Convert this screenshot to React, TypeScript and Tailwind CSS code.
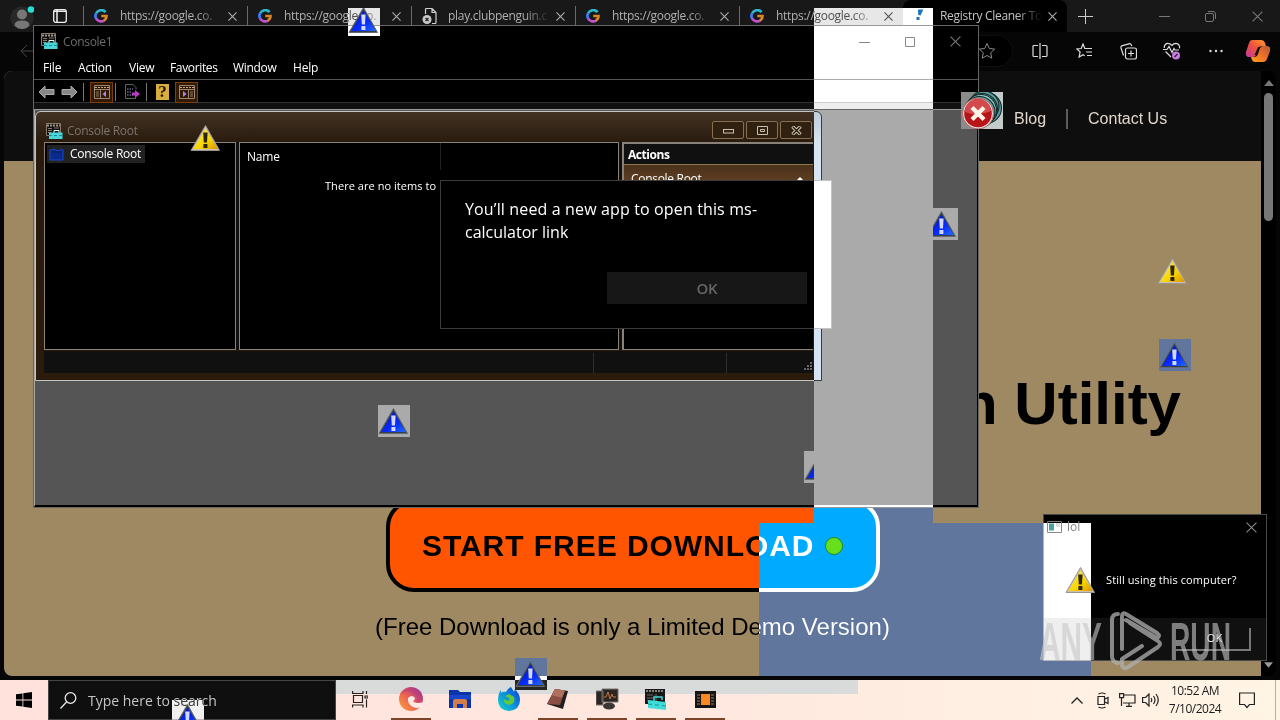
import type { ReactNode } from "react";

const GoogleIcon = () => (
  <svg width="14" height="14" viewBox="0 0 14 14" fill="none" strokeWidth="2.7">
    <path d="M11.6 3.2A5.6 5.6 0 0 0 2.1 4.6" stroke="#2bb6c9" />
    <path d="M2.1 4.4A5.6 5.6 0 0 0 2.1 9.6" stroke="#3a7dff" />
    <path d="M2.1 9.4A5.6 5.6 0 0 0 10.2 11.5" stroke="#c44fd0" />
    <path d="M7.2 7H12.5A5.6 5.6 0 0 1 9.9 11.6" stroke="#d98425" />
  </svg>
);

const BrokenPageIcon = () => (
  <svg width="16" height="16" viewBox="0 0 16 16" fill="none" stroke="#d0d0d0" strokeWidth="1.2">
    <path d="M3.5 6V1.5a1 1 0 0 1 1-1H10l4 4V14.500a1 1 0 0 1-1 1H10M10 .5v4h4" />
    <circle cx="5" cy="11.500" r="4.500" fill="#c8c8c8" stroke="none" />
    <path d="M3.500 10l3 3M6.500 10l-3 3" stroke="#222" />
  </svg>
);

const CloseIcon = ({ size = 9, color = "#a8a8a8", width = 1.3 }: { size?: number; color?: string; width?: number }) => (
  <svg width={size} height={size} viewBox="0 0 10 10" stroke={color} strokeWidth={width} className="shrink-0">
    <path d="M.5 .5L9.500 9.500M9.500 .5L.5 9.500" />
  </svg>
);

const WarningIcon = () => (
  <svg width="32" height="32" viewBox="0 0 32 32" className="block">
    <defs>
      <linearGradient id="warn" x1="0" y1="0" x2="1" y2="1">
        <stop offset="0" stopColor="#fff04a" />
        <stop offset="0.6" stopColor="#f8d400" />
        <stop offset="1" stopColor="#dc9200" />
      </linearGradient>
    </defs>
    <path d="M15.500 3.500L29.500 28.500H1Z" fill="#c9bfb4" stroke="#9c958f" strokeWidth="1" strokeLinejoin="round" />
    <path d="M15.500 6.500L27.800 27H3.200Z" fill="url(#warn)" />
    <path d="M13.200 10.500h4.400l-.6 10h-3.200zM13.400 22h4v4h-4z" fill="#2a2607" />
  </svg>
);

// warning icon painted with inverted colours
const InvertedWarning = ({ className, offset = "" }: { className: string; offset?: string }) => (
  <div className={`absolute overflow-hidden ${className}`}>
    <div className={offset}>
      <WarningIcon />
    </div>
    <div className="absolute inset-0 bg-white mix-blend-difference" />
  </div>
);

const ConsoleIcon = () => (
  <svg width="17" height="17" viewBox="0 0 17 17">
    <path d="M.5 .5h14v12H.5z" fill="#111" stroke="#8b7a6a" />
    <path d="M1 2.500h13" stroke="#a39484" strokeWidth="2" strokeDasharray="2 1" />
    <path d="M2 5.500h4M2 7.500h4M2 9.500h3M8 5h5" stroke="#857769" />
    <path d="M8 10V7.500h5V10" stroke="#d2ffff" fill="none" />
    <path d="M3 9.500h13.500V16H3z" fill="#49d5d8" />
    <path d="M3 12.500h13" stroke="#178c96" strokeDasharray="3 2" />
  </svg>
);

const Tab = ({ title, icon, active }: { title: string; icon: ReactNode; active?: boolean }) => (
  <div
    className={`relative flex h-8 w-[164px] shrink-0 items-center pl-[11px] ${
      active ? "rounded-t-lg bg-black text-[#c4c4c4]" : "text-[#b0b0b0]"
    }`}
  >
    {!active && <div className="absolute left-0 top-1.5 h-5 w-px bg-[#6c6c6c]" />}
    <div className="flex w-[26px] shrink-0">{icon}</div>
    <div className="w-[106px] shrink-0 whitespace-nowrap text-xs tracking-[-0.3px] [mask-image:linear-gradient(to_right,black_72%,transparent_96%)]">
      {title}
    </div>
    <div className="ml-[2px]">
      <CloseIcon />
    </div>
  </div>
);

const TabStrip = () => (
  <div className="flex h-8 bg-[#181818]">
    <div className="flex w-[83px] items-center">
      <svg width="24" height="24" viewBox="0 0 24 24" className="ml-[10px] mt-1">
        <circle cx="12" cy="12" r="11.500" fill="#282828" />
        <circle cx="12" cy="8.500" r="5" fill="#777" />
        <path d="M4.500 19.500Q4.500 14.500 12 14.500T19.500 19.500Q16 23 12 23T4.500 19.500Z" fill="#777" />
        <circle cx="21" cy="3.500" r="3.300" fill="#24e0d4" />
      </svg>
      <svg width="14" height="14" viewBox="0 0 14 14" fill="none" className="ml-[19px]">
        <rect x=".7" y=".7" width="12.600" height="12.600" rx="2" stroke="#eee" strokeWidth="1.300" />
        <path d="M1 2.300h12M4 1v12" stroke="#eee" strokeWidth="1.500" />
      </svg>
    </div>
    <Tab title="https://google.co." icon={<GoogleIcon />} />
    <Tab title="https://google.co." icon={<GoogleIcon />} />
    <Tab title="play.clubpenguin.c" icon={<BrokenPageIcon />} />
    <Tab title="https://google.co." icon={<GoogleIcon />} />
    <Tab title="https://google.co." icon={<GoogleIcon />} />
    <Tab
      active
      title="Registry Cleaner To"
      icon={
        <svg width="16" height="16" viewBox="0 0 16 16" fill="none" stroke="#e08a44" strokeWidth="2.500">
          <path d="M4 3h3l-2 4M4 9v3" strokeWidth="3" />
        </svg>
      }
    />
    <div className="flex flex-1 items-center text-[#888]">
      <svg width="15" height="15" viewBox="0 0 15 15" stroke="#ccc" className="ml-[11px]">
        <path d="M7.500 0v15M0 7.500h15" />
      </svg>
      <svg width="11" height="11" viewBox="0 0 11 11" stroke="#777" className="ml-[66px]">
        <path d="M0 5.500h11" />
      </svg>
      <svg width="11" height="11" viewBox="0 0 11 11" stroke="#777" fill="none" className="ml-[35px]">
        <rect x=".5" y="2.500" width="8" height="8" rx="1.500" />
        <path d="M3 .5h5a2.500 2.500 0 0 1 2.500 2.500v5" />
      </svg>
      <div className="ml-[36px]">
        <CloseIcon size={11} color="#777" width={1} />
      </div>
    </div>
  </div>
);

const AddressBar = () => (
  <div className="flex h-[38px] items-center bg-[#060606]">
    <svg width="16" height="14" viewBox="0 0 16 14" stroke="#444" fill="none" className="ml-5">
      <path d="M16 7H1M7 1L1 7l6 6" />
    </svg>
    <div className="ml-[24px] flex h-[30px] w-[952px] items-center justify-end rounded-full bg-black pr-4 ring-1 ring-[#0e0e0e]">
      <svg width="18" height="18" viewBox="0 0 18 18" stroke="#8a8a8a" fill="none">
        <path d="M9 1.500l2.300 5 5.400.6-4 3.700 1.100 5.400L9 13.500l-4.800 2.700 1.100-5.400-4-3.700 5.400-.6z" />
      </svg>
    </div>
    <div className="ml-[20px] flex items-center gap-[28px]">
      <svg width="16" height="16" viewBox="0 0 16 16" stroke="#ddd" fill="none" strokeWidth="1.200">
        <path d="M8 0v16M6 2.500H2a1 1 0 0 0-1 1v9a1 1 0 0 0 1 1h4M10 2.500h4a1 1 0 0 1 1 1v9a1 1 0 0 1-1 1h-4" />
      </svg>
      <svg width="17" height="17" viewBox="0 0 17 17" stroke="#ddd" fill="none" strokeWidth="1.200">
        <path d="M11 5.500H8.800L7 1 5.200 5.500.8 6l3.300 3-1 5L7 11.700l1.700 1M10.500 5.500H16M10 9h6M11 12.500h5" />
      </svg>
      <svg width="17" height="17" viewBox="0 0 17 17" stroke="#ddd" fill="none" strokeWidth="1.200" className="-ml-px">
        <rect x="5.500" y="5" width="11" height="11" rx="2" />
        <path d="M11 7.500v6M8 10.500h6M3.500 12.500L1 5a2 2 0 0 1 1.300-2.400L9 .8a2 2 0 0 1 2.400 1.300l.4 1" />
      </svg>
      <svg width="18" height="18" viewBox="0 0 18 18" stroke="#ddd" fill="none" strokeWidth="1.200" className="-ml-[2px]">
        <path d="M8 15L2.500 9.500M1.300 6C1 3 3 1.200 5 1.300c2 0 3 1.200 3.800 2.200C9.700 2.400 11 1.300 13 1.300c2.500.2 4 2.500 3.500 5M0 7.500h4l2-3 3 6 2-4 1 1.500h4" />
        <circle cx="13" cy="13.500" r="4" fill="#c77be0" stroke="none" />
        <path d="M11.500 15l3-3" stroke="#222" />
      </svg>
      <svg width="14" height="4" viewBox="0 0 14 4" fill="#ddd">
        <circle cx="1.500" cy="2" r="1.200" />
        <circle cx="7" cy="2" r="1.200" />
        <circle cx="12.500" cy="2" r="1.200" />
      </svg>
    </div>
    <svg width="26" height="24" viewBox="0 0 26 24" className="ml-[22px]">
      <defs>
        <linearGradient id="copilotL" x1="1" y1="0" x2="0" y2="1">
          <stop offset="0" stopColor="#ff9c2a" />
          <stop offset="0.5" stopColor="#f0503c" />
          <stop offset="1" stopColor="#c33aa0" />
        </linearGradient>
        <linearGradient id="copilotR" x1="1" y1="0" x2="0" y2="1">
          <stop offset="0" stopColor="#b05a36" />
          <stop offset="0.5" stopColor="#f0702a" />
          <stop offset="1" stopColor="#ffa319" />
        </linearGradient>
      </defs>
      <path d="M7 1h9q3 0 4 3l1 3h-4q-3 0-4 3l-2 6q-1 2-3 2H4q-4 0-3-5L4 4Q5 1 7 1Z" fill="url(#copilotL)" />
      <path d="M19 23h-9q-2 0-3-2l-1-3h3q3 0 4-3l2-6q1-2 3-2h4q4 0 3 5l-3 8q-1 3-3 3Z" fill="url(#copilotR)" />
      <path d="M13 8h3q-2 0-3 3l-1.500 5h-2z" fill="#2a1208" />
    </svg>
  </div>
);

const Browser = () => (
  <div className="absolute left-0 top-0 flex h-[680px] w-[1280px] flex-col overflow-hidden bg-[#060606]">
    <TabStrip />
    <AddressBar />
    <div className="ml-1 mr-1 mt-px flex h-[605px] overflow-hidden rounded-lg bg-black">
      <div className="flex w-[1257px] flex-col bg-[#9f8963]">
        <div className="flex h-[90px] items-center bg-[#0e0e0e] pl-[1010px] pt-[5px] font-['Liberation_Sans'] text-base text-[#e0d6cc]">
          <span>Blog</span>
          <span className="ml-5 h-5 w-0.5 bg-[#5c5c5c]" />
          <span className="ml-5">Contact Us</span>
        </div>
        <h1 className="mr-[80px] mt-[207px] h-[72px] text-right font-['Liberation_Sans'] text-[60px] font-bold leading-[72px] text-black">
          n Utility
        </h1>
        <div className="ml-[382px] mt-[59px] flex h-[93px] w-[494px] items-center whitespace-nowrap rounded-[28px] border-4 border-black bg-[#ff5500] pl-8 font-['Liberation_Sans'] text-[30px] font-bold tracking-[0.95px] text-black">
          START FREE DOWNLOAD
        </div>
        <p className="ml-[371px] mt-[17px] whitespace-nowrap font-['Liberation_Sans'] text-2xl leading-9 text-black">
          (Free Download is only a Limited Demo Version)
        </p>
      </div>
      <div className="flex flex-1 flex-col items-center pb-2 pt-[9px]">
        <svg width="10" height="6" viewBox="0 0 10 6" fill="#777">
          <path d="M5 0l5 6H0z" />
        </svg>
        <div className="mt-[7px] h-[128px] w-[9px] rounded-full bg-[#777]" />
        <svg width="9" height="6" viewBox="0 0 10 6" fill="#999" className="mt-auto">
          <path d="M5 6l5-6H0z" />
        </svg>
      </div>
    </div>
  </div>
);

const ChildButton = ({ children }: { children: ReactNode }) => (
  <div className="flex h-[18px] w-8 items-center justify-center rounded-[2px] border border-[#86704f] bg-[#30200f]">
    {children}
  </div>
);

const ConsoleChild = () => (
  <div className="mt-px flex h-[270px] w-[787px] flex-col rounded-t-md border border-[#c4c4c4] bg-[linear-gradient(#413224,#281a0c_31px,#2a1b0a)] pb-[7px] pl-2 pr-[8px]">
    <div className="flex h-[30px] items-center pl-0.5 pt-2">
      <ConsoleIcon />
      <span className="ml-1 text-xs tracking-[-0.28px] text-[#7d736b]">Console Root</span>
      <div className="-mt-[2px] ml-auto mr-[1px] flex gap-0.5">
        <ChildButton>
          <svg width="11" height="5" viewBox="0 0 11 5" className="mt-[3px]">
            <rect x=".5" y=".5" width="10" height="3.500" fill="none" stroke="#c9bfae" />
          </svg>
        </ChildButton>
        <ChildButton>
          <svg width="11" height="9" viewBox="0 0 11 9" fill="none" stroke="#c9bfae">
            <path d="M.5 .5h10v8H.5zM3.500 3.500h4v2h-4z" />
          </svg>
        </ChildButton>
        <ChildButton>
          <svg width="11" height="9" viewBox="0 0 11 9">
            <path d="M1.500 .5l8 8M9.500 .5l-8 8" stroke="#c9bfae" strokeWidth="3.500" />
            <path d="M2 1l7 7M9 1L2 8" stroke="#241709" strokeWidth="1.300" />
          </svg>
        </ChildButton>
      </div>
    </div>
    <div className="flex h-[208px] gap-[3px] bg-[#111] text-xs text-white">
      <div className="w-[192px] shrink-0 border border-[#8a8278] bg-black p-0.5">
        <div className="flex h-[18px] w-[98px] items-center whitespace-nowrap bg-[#222] pl-0.5">
          <svg width="15" height="13" viewBox="0 0 15 13">
            <path d="M1 2l5-1 1 1.500h4L12 1l2 1v10H1z" fill="#0b2a8c" stroke="#1a47c4" />
            <path d="M3 4h10" stroke="#061a5c" />
          </svg>
          <span className="ml-[6px] tracking-[-0.25px]">Console Root</span>
        </div>
      </div>
      <div className="flex w-[380px] shrink-0 flex-col border border-[#8a8278] bg-black">
        <div className="flex h-[27px] w-[201px] items-center border-r border-[#222] pl-[7px] tracking-[-0.2px]">Name</div>
        <p className="ml-[85px] mt-[9px] whitespace-nowrap text-[11px] tracking-[0.05px]">There are no items to</p>
      </div>
      <div className="flex-1 border-b border-l-2 border-t-2 border-[#8a8278] bg-black">
        <div className="flex h-[21px] items-center border-b border-[#8d7550] bg-[#101010] pl-1 pt-0.5 font-bold tracking-[-0.45px]">
          Actions
        </div>
        <div className="flex h-[27px] items-center justify-between bg-[linear-gradient(#4a321b,#6a4626)] pl-[7px] pr-[9px]">
          <span className="tracking-[-0.3px]">Console Root</span>
          <svg width="8" height="4" viewBox="0 0 8 4" fill="#fff">
            <path d="M4 0l4 4H0z" />
          </svg>
        </div>
      </div>
    </div>
    <div className="mt-px flex h-[22px] items-end bg-[#101010]">
      <div className="h-5 w-[550px] border-r border-[#2e2e2e]" />
      <div className="h-5 w-[133px] border-r border-[#2e2e2e]" />
      <svg width="9" height="9" viewBox="0 0 9 9" fill="#666" className="mb-0.5 ml-auto">
        <path d="M6 0h2v2H6zM3 3h2v2H3zM6 3h2v2H6zM0 6h2v2H0zM3 6h2v2H3zM6 6h2v2H6z" />
      </svg>
    </div>
  </div>
);

const Console = () => (
  <div className="absolute left-[33px] top-[25px] flex h-[483px] w-[946px] flex-col border border-[#666] bg-black">
    <div className="flex h-[30px] items-center pl-[7px] pt-px">
      <ConsoleIcon />
      <span className="ml-[5px] text-xs tracking-[-0.3px] text-[#6c6c6c]">Console1</span>
      <div className="ml-auto mr-[17px] flex items-center gap-[35px]">
        <svg width="11" height="10" viewBox="0 0 11 10" stroke="#777">
          <path d="M0 5.500h11" />
        </svg>
        <svg width="10" height="10" viewBox="0 0 10 10" stroke="#777" fill="none">
          <path d="M.5 .5h9v9h-9z" />
        </svg>
        <CloseIcon size={11} color="#777" width={1} />
      </div>
    </div>
    <div className="flex h-[23px] items-center pl-[9px] text-xs tracking-[-0.2px] text-white">
      <span className="w-[35px]">File</span>
      <span className="w-[51px]">Action</span>
      <span className="w-[41px]">View</span>
      <span className="w-[63px] tracking-[-0.35px]">Favorites</span>
      <span className="w-[60px] tracking-[-0.3px]">Window</span>
      <span>Help</span>
    </div>
    <div className="flex h-[24px] items-center border-b border-t border-[#555] border-b-[#333] pl-1 pt-0.5">
      <svg width="17" height="14" viewBox="0 0 17 14" fill="#888" stroke="#aaa">
        <path d="M1 7l6-6v3.500h9v5H7V13z" />
      </svg>
      <svg width="17" height="14" viewBox="0 0 17 14" fill="#888" stroke="#aaa" className="ml-[6px]">
        <path d="M16 7l-6-6v3.500H1v5h9V13z" />
      </svg>
      <span className="ml-[5px] h-[18px] w-px bg-[#777]" />
      <span className="ml-[6px] flex h-[21px] w-[23px] items-center justify-center border border-[#7a3f0a] bg-[#331900]">
        <PaneIcon />
      </span>
      <span className="ml-[2px] h-[18px] w-px bg-[#777]" />
      <svg width="17" height="16" viewBox="0 0 17 16" fill="none" className="ml-[8px]">
        <path d="M9 .5H1.500v14h10V11M9 .5l3 3v2" stroke="#566b56" />
        <path d="M3 5h6M3 8h5M3 11h6" stroke="#9a8bd0" strokeDasharray="1.500 1" />
        <path d="M8 8.500h3V6l5 4-5 4v-2.500H8z" fill="#b53cc4" />
      </svg>
      <span className="ml-[5px] h-[18px] w-px bg-[#777]" />
      <span className="ml-[9px] flex h-4 w-[13px] items-center justify-center bg-[#d9ad3c] font-['Liberation_Serif'] text-[17px] font-bold leading-4 text-[#1c1400]">
        ?
      </span>
      <span className="ml-[6px] flex h-[21px] w-[23px] items-center justify-center border border-[#7a3f0a] bg-[#331900]">
        <PaneIcon flip />
      </span>
    </div>
    <div className="flex flex-1 flex-col border-t-[6px] border-[#111] bg-[#555]">
      <div className="flex flex-1 flex-col border-b-2 border-l border-r border-t border-b-black border-l-[#aaa] border-r-black border-t-[#999]">
        <ConsoleChild />
      </div>
    </div>
  </div>
);

const PaneIcon = ({ flip }: { flip?: boolean }) => (
  <svg width="16" height="14" viewBox="0 0 16 14" fill="none">
    <path d={flip ? "M.5 .5h15v13H.5zM.5 4.500h15M9.500 4.500v9" : "M.5 .5h15v13H.5zM.5 4.500h15M6.500 4.500v9"} stroke="#9a8876" />
    <path d="M1 2.500h14" stroke="#c0ad98" strokeDasharray="2 1" />
    <path d={flip ? "M11 7h3M11 9h3M11 11h3" : "M2 7h3M2 9h3M2 11h3"} stroke="#8a7868" />
    <path d={flip ? "M4 6v6l3.500-3z" : "M12 6v6L8.500 9z"} fill="#b880e8" />
  </svg>
);

const AppPrompt = () => (
  <div className="absolute left-[440px] top-[180px] flex h-[149px] w-[392px] flex-col border border-[#3c3c3c] bg-black px-6 pt-[17px] text-white">
    <p className="w-[320px] whitespace-nowrap text-base leading-[23px] tracking-[0.14px]">
      You’ll need a new app to open this ms-
      <br />
      <span className="tracking-normal">calculator link</span>
    </p>
    <div className="ml-[142px] mt-[28px] flex h-8 w-[200px] items-center justify-center bg-[#171717] pt-px text-[15px] font-semibold tracking-[-0.3px] text-[#666]">
      OK
    </div>
  </div>
);

const LolDialog = () => (
  <div className="absolute left-[1043px] top-[514px] flex h-[147px] w-[224px] flex-col border border-[#4a4a4a] bg-black text-white">
    <div className="flex h-[24px] items-center pl-[3px] pr-[9px]">
      <svg width="15" height="12" viewBox="0 0 15 12" fill="none">
        <path d="M.5 .5h14v11H.5z" stroke="#777" />
        <path d="M2 2.500h5v7H2z" fill="#b4605c" />
        <path d="M9 3h4M9 5h4" stroke="#444" />
      </svg>
      <span className="ml-[5px] text-xs text-[#7d7d7d]">lol</span>
      <div className="ml-auto">
        <CloseIcon size={11} color="#888" width={1} />
      </div>
    </div>
    <p className="mt-[32px] whitespace-nowrap pl-[62px] text-[11px] leading-[18px] tracking-[0.1px]">Still using this computer?</p>
    <div className="mt-auto flex h-[42px] items-center justify-end bg-[#101010] pr-[15px]">
      <div className="flex h-[23px] w-[75px] items-center justify-center border-b-2 border-r-2 border-[#777] pl-1 pt-px text-[11px]">
        OK
      </div>
    </div>
  </div>
);

const ErrorTrail = () => (
  <svg width="42" height="37" viewBox="0 0 42 37" className="absolute left-[961px] top-[92px]">
    <path d="M0 0h42v37H0z" fill="#c3cccb" />
    <path d="M0 0h17v37H0z" fill="#8b8b8b" />
    <g fill="#589c9b" stroke="#15292a" strokeWidth="1.100">
      <circle cx="25" cy="16" r="15.500" />
      <circle cx="23" cy="14" r="15" />
      <circle cx="21" cy="17" r="15.500" />
      <circle cx="20" cy="18" r="15.500" fill="#8ccac4" />
      <circle cx="18.500" cy="20" r="15.500" />
    </g>
    <circle cx="17" cy="21.500" r="15.500" fill="#e3dddd" stroke="#a66" />
    <circle cx="17" cy="21.500" r="13.800" fill="#b81418" />
    <path d="M4 20a13 13 0 0 1 26-1q-13 6-26 1Z" fill="#d44a4c" />
    <path d="M11 15.500l12 12M23 15.500l-12 12" stroke="#fff4e8" strokeWidth="4.300" />
  </svg>
);

const Watermark = () => (
  <svg width="196" height="66" viewBox="0 0 196 66" className="absolute left-[1038px] top-[607px]">
    <g fill="#c8c8c8" opacity="0.6" fontWeight="bold" fontFamily="Liberation Sans" fontSize="54">
      <text x="1" y="53" textLength="63" lengthAdjust="spacingAndGlyphs">
        ANY
      </text>
      <text x="132" y="53" textLength="61" lengthAdjust="spacingAndGlyphs">
        RUN
      </text>
    </g>
    <g fill="none" stroke="#b0b0b0" strokeWidth="4" opacity="0.75" strokeLinejoin="round" strokeLinecap="round">
      <path d="M80 7q-6 0-6 6v36q0 6 6 7" />
      <path d="M84 42V9q0-4 4-2l31 19q4 3 0 5L88 13" />
      <path d="M104 39L84 52v6q1 5 6 2l30-20q4-3 0-6L92 16" />
    </g>
  </svg>
);

const Running = ({ children, on = true }: { children: ReactNode; on?: boolean }) => (
  <div className={`flex h-10 w-10 items-center justify-center ${on ? "border-b-2 border-[#7c452a]" : "border-b-2 border-transparent"}`}>
    {children}
  </div>
);

const Taskbar = () => (
  <div className="absolute left-0 top-[680px] flex h-10 w-[1280px] items-center bg-[linear-gradient(to_right,#ffe2db,#ffe8df_55%,#fff5e5)]">
    <div className="absolute left-[336px] top-0 h-[14px] w-[522px] bg-[#d9dada]" />
    <div className="relative flex w-12 justify-center">
      <svg width="16" height="16" viewBox="0 0 16 16">
        <path d="M0 2.300l6.500-.9v6.200H0zM7.300 1.300L16 0v7.600H7.300zM0 8.400h6.500v6.200L0 13.700zM7.300 8.400H16V16l-8.700-1.300z" />
      </svg>
    </div>
    <div className="relative flex h-10 w-[288px] items-center border border-[#444] bg-[#0f0f0f] pl-[11px]">
      <svg width="17" height="17" viewBox="0 0 17 17" fill="none" stroke="#e8e8e8" strokeWidth="1.300">
        <circle cx="10.500" cy="6" r="5.300" />
        <path d="M6.500 10L.5 16.500" />
      </svg>
      <span className="ml-[11px] pt-px text-sm text-[#c4c4c4]">Type here to search</span>
    </div>
    <div className="relative flex h-10 items-center pl-1">
      <Running on={false}>
        <svg width="16" height="17" viewBox="0 0 16 17" fill="none" stroke="#2a2220" strokeWidth="1.200">
          <path d="M.6 0v2.500H11V0M1.500 4.500h9v7h-9zM.6 16.500V14H11v2.500M14.500 0v3M14.500 8.500v8M13 5h3v2h-3z" />
        </svg>
      </Running>
      <div className="ml-[11px] flex gap-[9px]">
        <Running>
          <svg width="24" height="24" viewBox="0 0 24 24">
            <defs>
              <linearGradient id="edge" x1="0" y1="1" x2="1" y2="0">
                <stop offset="0" stopColor="#f7a53c" />
                <stop offset="0.45" stopColor="#ee6350" />
                <stop offset="1" stopColor="#8d2aa8" />
              </linearGradient>
            </defs>
            <circle cx="12" cy="12" r="12" fill="url(#edge)" />
            <path d="M9 11q4-4 7 0 0 2-2 3 2 3 8 1.500L24 16l-2 4q-5 2-9-.5Q8 16 9 11Z" fill="#ffe9e2" />
            <path d="M1 8q5-5 11-3 9 3 5 10 7 0 6-5-2-9-12-9Q4 2 1 8Z" fill="#b93c78" opacity=".45" />
          </svg>
        </Running>
        <Running on={false}>
          <svg width="22" height="19" viewBox="0 0 22 19">
            <path d="M0 0h9l2 2h11v16H0z" fill="#0a35a8" />
            <path d="M0 5h22v4H0z" fill="#1746cc" />
            <path d="M4 18V11q0-2 2-2h10q2 0 2 2v7h-4v-4H8v4z" fill="#d07c4c" />
          </svg>
        </Running>
        <Running on={false}>
          <svg width="24" height="24" viewBox="0 0 24 24">
            <defs>
              <linearGradient id="fox" x1="1" y1="0" x2="0" y2="1">
                <stop offset="0" stopColor="#0a3bd4" />
                <stop offset="0.5" stopColor="#0a8fe0" />
                <stop offset="1" stopColor="#19d8c0" />
              </linearGradient>
            </defs>
            <path d="M14 0l3 5q1-2 0-3 6 4 6 11 0 10-11 11Q1 23 1 13 1 7 4 3v3q2-2 5-1 2-4 5-5Z" fill="url(#fox)" />
            <path d="M8 9l4-2 5 3q2 7-5 8-6-1-5-6l4 2 2-2Z" fill="#64c83c" />
          </svg>
        </Running>
        <Running>
          <svg width="22" height="22" viewBox="0 0 22 22">
            <path d="M8 1l13 2-5 18L0 16z" fill="#241e1c" />
            <path d="M8 1l10 1.500L13 17 0 16z" fill="#8b4f44" />
            <path d="M8 1l10 1.500-3 7-10-2z" fill="#b0705f" />
          </svg>
        </Running>
        <Running>
          <svg width="23" height="22" viewBox="0 0 23 22">
            <path d="M0 3h7v14H0zM6 1h16v13H6z" fill="#2a2624" stroke="#77706c" />
            <path d="M8 9h2l2-5 2 7 2-5 1 3h3" stroke="#c8703c" fill="none" />
            <ellipse cx="13" cy="18" rx="6" ry="3.500" fill="#3a3634" />
          </svg>
        </Running>
        <Running>
          <svg width="23" height="23" viewBox="0 0 23 23">
            <path d="M0 1h20v15H0z" fill="#17181a" />
            <path d="M1 3h18" stroke="#8b8177" strokeWidth="2" strokeDasharray="2 1" />
            <path d="M2 7h6M2 10h6M2 13h4M11 6v8" stroke="#72685f" />
            <path d="M9 13V9h8v3" stroke="#3fd8da" strokeWidth="1.500" fill="none" />
            <path d="M3 12l18 2v8L3 20z" fill="#40dcd8" />
            <path d="M3 16l18 2" stroke="#139aa0" strokeDasharray="4 3" />
          </svg>
        </Running>
        <Running>
          <svg width="21" height="17" viewBox="0 0 21 17">
            <path d="M0 0h21v17H0z" fill="#17130f" />
            <path d="M2 4h3M2 7h3M2 10h3M2 13h3M16 4h3M16 7h3M16 10h3M16 13h3" stroke="#8d8278" />
            <path d="M6 3h9v11H6z" fill="#f98722" />
          </svg>
        </Running>
      </div>
    </div>
    <div className="ml-auto mr-[25px] flex items-center">
      <svg width="12" height="7" viewBox="0 0 12 7" fill="none" stroke="#222" strokeWidth="1.300">
        <path d="M.5 6.500l5.500-5.500 5.500 5.500" />
      </svg>
      <svg width="12" height="17" viewBox="0 0 12 17" fill="none" stroke="#222" strokeWidth="1.200" className="ml-[14px]">
        <path d="M1.500 2Q5 0 8.500 2M1.500 15Q5 17 8.500 15M1 4.500h6.500v8H1zM8 7l3-1.500v6L8 10" />
      </svg>
      <svg width="17" height="14" viewBox="0 0 17 14" fill="none" stroke="#222" strokeWidth="1.200" className="ml-[10px]">
        <path d="M5 2h11v8H4M10 10v3M7 13.300h6M.6 .6h4v4h-4zM2.500 4.500V13" />
      </svg>
      <svg width="17" height="14" viewBox="0 0 17 14" fill="none" stroke="#222" strokeWidth="1.200" className="ml-[6px]">
        <path d="M.6 4.500h3L7 1v12L3.600 9.500h-3zM9 5q1.500 2 0 4M11.500 3q3 4 0 8M14 1q4.500 6 0 12" />
      </svg>
      <div className="ml-[1px] w-[70px] whitespace-nowrap text-center text-xs font-medium leading-[18px] tracking-[-0.5px] text-[#1c1c1c]">
        10:52 AM
        <br />
        7/10/2024
      </div>
      <svg width="16" height="17" viewBox="0 0 16 17" fill="none" stroke="#222" strokeWidth="1.200" className="ml-[9px]">
        <path d="M.6 1h14.800v11.500H10.500L8 15.500l-2.500-3H.6z" />
      </svg>
    </div>
    <div className="absolute right-[4px] top-0 h-10 w-px bg-[#b8b0a8]" />
  </div>
);

export default function App() {
  return (
    <div className="relative h-[720px] w-[1280px] overflow-hidden bg-black font-['Open_Sans','Noto_Sans',sans-serif]">
      <Browser />
      <Console />
      <AppPrompt />
      <LolDialog />
      <Taskbar />

      {/* Inverted patches of the desktop */}
      <div className="absolute left-[814px] top-2 h-[515px] w-[119px] bg-white mix-blend-difference" />
      <div className="absolute left-[759px] top-[523px] h-[153px] w-[332px] bg-white mix-blend-difference" />

      <InvertedWarning className="left-[348px] top-2 h-7 w-8" offset="-mt-1" />
      <InvertedWarning className="left-[378px] top-[405px] h-8 w-8" />
      <InvertedWarning className="left-[933px] top-[208px] h-8 w-[25px]" offset="-ml-[7px] w-8" />
      <InvertedWarning className="left-[804px] top-[451px] h-8 w-[10px]" offset="w-8" />
      <InvertedWarning className="left-[1159px] top-[339px] h-8 w-8" />
      <InvertedWarning className="left-[515px] top-[658px] h-8 w-8" />
      <InvertedWarning className="left-[172px] top-[700px] h-5 w-8" offset="mt-px" />

      <div className="absolute left-[190px] top-[122px]">
        <WarningIcon />
      </div>
      <div className="absolute left-[1157px] top-[255px]">
        <WarningIcon />
      </div>
      <div className="absolute left-[1065px] top-[564px]">
        <WarningIcon />
      </div>
      <div className="absolute left-[825px] top-[537px] h-[18px] w-[18px] rounded-full border border-[#238a1c] bg-[#66e01c]" />
      <ErrorTrail />
      <Watermark />
    </div>
  );
}
